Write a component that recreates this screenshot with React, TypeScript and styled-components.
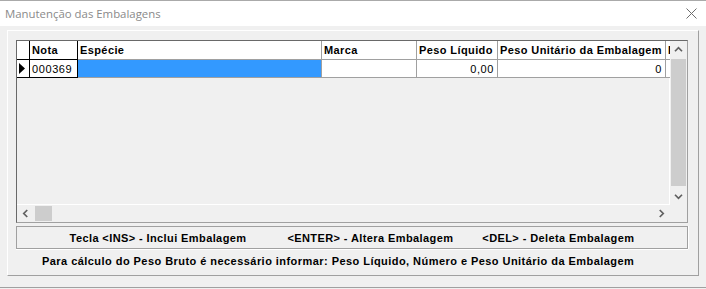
import React from 'react';
import styled, { createGlobalStyle } from 'styled-components';

const Global = createGlobalStyle`
  html, body { margin: 0; padding: 0; background: #f0f0f0; }
  body { width: 706px; height: 289px; overflow: hidden; font-family: "Liberation Sans", Arial, sans-serif; }
`;

const Window = styled.div`
  width: 706px;
  height: 288px;
  box-sizing: border-box;
  display: flex;
  flex-direction: column;
  border-top: 1px solid #aaaaaa;
  border-bottom: 1px solid #a0a0a0;
  background: #f0f0f0;
`;

const TitleBar = styled.div`
  height: 25px;
  flex: none;
  background: #ffffff;
  display: flex;
  align-items: center;
  justify-content: space-between;
  padding: 0 9px 0 5px;
`;

const Title = styled.span`
  font-family: "Open Sans", "Noto Sans", sans-serif;
  font-size: 11.4px;
  color: #8a8a8a;
`;

const Body = styled.div`
  flex: 1;
  padding: 4px 7px 0 7px;
  display: flex;
  flex-direction: column;
`;

const Panel = styled.div`
  height: 246px;
  box-sizing: border-box;
  border-top: 1px solid #ffffff;
  border-left: 1px solid #ffffff;
  border-right: 1px solid #a0a0a0;
  border-bottom: 1px solid #a0a0a0;
  padding: 9px 0 0 8px;
  display: flex;
  flex-direction: column;
`;

const GridFrame = styled.div`
  width: 672px;
  height: 183px;
  box-sizing: border-box;
  border: 1px solid #a0a0a0;
  border-top-color: #696969;
  border-left-color: #696969;
  display: grid;
  grid-template-columns: 653px 17px;
  grid-template-rows: 164px 17px;
  background: #f0f0f0;
`;

const Viewport = styled.div`
  overflow: hidden;
  background: #f0f0f0;
  box-shadow: inset -1px -1px 0 #ffffff;
`;

const Row = styled.div<{ $h: number }>`
  display: flex;
  height: ${p => p.$h}px;
  width: max-content;
`;

const Cell = styled.div<{ $w: number; $align?: string; $bold?: boolean; $fixed?: boolean; $bg?: string }>`
  width: ${p => p.$w}px;
  flex: none;
  box-sizing: border-box;
  height: 100%;
  background: ${p => p.$bg || '#ffffff'};
  border-right: 1px solid ${p => (p.$fixed ? '#000000' : '#a0a0a0')};
  border-bottom: 1px solid ${p => (p.$fixed ? '#000000' : '#a0a0a0')};
  padding: 0 3px 0 2px;
  display: flex;
  align-items: center;
  justify-content: ${p => p.$align || 'flex-start'};
  font-family: "Liberation Sans", Arial, sans-serif;
  font-size: 11px;
  font-weight: ${p => (p.$bold ? 700 : 400)};
  letter-spacing: ${p => (p.$bold ? '0.4px' : '0.6px')};
  color: #000000;
  white-space: nowrap;
  overflow: hidden;
`;

const ScrollV = styled.div`
  display: flex;
  flex-direction: column;
  background: #f0f0f0;
`;

const ScrollH = styled.div`
  display: flex;
  background: #f0f0f0;
`;

const Corner = styled.div`
  background: #f0f0f0;
`;

const Arrow = styled.div`
  width: 17px;
  height: 17px;
  flex: none;
  display: flex;
  align-items: center;
  justify-content: center;
`;

const TrackV = styled.div`
  flex: 1;
  padding: 1px 1px 0 1px;
`;

const ThumbV = styled.div`
  height: 127px;
  background: #cdcdcd;
`;

const TrackH = styled.div`
  flex: 1;
  padding: 1px 0 1px 1px;
`;

const ThumbH = styled.div`
  width: 17px;
  height: 100%;
  background: #cdcdcd;
`;

const InfoBox = styled.div`
  margin-top: 3px;
  width: 672px;
  height: 23px;
  box-sizing: border-box;
  border: 1px solid #a0a0a0;
  box-shadow: 0 1px 0 #ffffff, 1px 0 0 #ffffff;
  display: flex;
  align-items: center;
  justify-content: center;
  padding-left: 0;
`;

const Hint = styled.span<{ $gap?: number }>`
  margin-left: ${p => p.$gap || 0}px;
  font-size: 11px;
  font-weight: 700;
  letter-spacing: 0.4px;
  color: #000;
  white-space: nowrap;
`;

const Note = styled.div`
  margin-top: 5px;
  padding-left: 26px;
  font-size: 11px;
  font-weight: 700;
  letter-spacing: 0.45px;
  color: #000;
  white-space: nowrap;
  line-height: 14px;
`;

const Chevron = ({ dir }: { dir: 'up' | 'down' | 'left' | 'right' }) => {
  const pts: Record<string, string> = {
    up: '1,5 4.5,1.5 8,5',
    down: '1,1.5 4.5,5 8,1.5',
    left: '5,1 1.5,4.5 5,8',
    right: '1.5,1 5,4.5 1.5,8',
  };
  const vertical = dir === 'up' || dir === 'down';
  return (
    <svg width={vertical ? 9 : 7} height={vertical ? 7 : 9} viewBox={vertical ? '0 0 9 6.5' : '0 0 6.5 9'}>
      <polyline points={pts[dir]} fill="none" stroke="#606060" strokeWidth="1.7" />
    </svg>
  );
};

const columns = [
  { w: 13, title: '', fixed: true },
  { w: 48, title: 'Nota', fixed: true },
  { w: 244, title: 'Espécie' },
  { w: 95, title: 'Marca' },
  { w: 81, title: 'Peso Líquido' },
  { w: 168, title: 'Peso Unitário da Embalagem' },
  { w: 80, title: 'Peso Bruto' },
];

export default function App() {
  return (
    <>
      <Global />
      <Window>
        <TitleBar>
          <Title>Manutenção das Embalagens</Title>
          <svg width="11" height="11" viewBox="0 0 11 11">
            <path d="M0.5 0.5 L10.5 10.5 M10.5 0.5 L0.5 10.5" stroke="#6d6d6d" strokeWidth="1" />
          </svg>
        </TitleBar>
        <Body>
          <Panel>
            <GridFrame>
              <Viewport>
                <Row $h={19}>
                  {columns.map((c, i) => (
                    <Cell key={i} $w={c.w} $bold $fixed={c.fixed}>
                      {c.title}
                    </Cell>
                  ))}
                </Row>
                <Row $h={18}>
                  <Cell $w={13} $fixed>
                    <svg width="6" height="11" viewBox="0 0 6 11">
                      <polygon points="0,0 6,5.5 0,11" fill="#000" />
                    </svg>
                  </Cell>
                  <Cell $w={48} $fixed>000369</Cell>
                  <Cell $w={244} $bg="#3399ff" />
                  <Cell $w={95} />
                  <Cell $w={81} $align="flex-end">0,00</Cell>
                  <Cell $w={168} $align="flex-end">0</Cell>
                  <Cell $w={80} />
                </Row>
              </Viewport>
              <ScrollV>
                <Arrow><Chevron dir="up" /></Arrow>
                <TrackV><ThumbV /></TrackV>
                <Arrow><Chevron dir="down" /></Arrow>
              </ScrollV>
              <ScrollH>
                <Arrow><Chevron dir="left" /></Arrow>
                <TrackH><ThumbH /></TrackH>
                <Arrow><Chevron dir="right" /></Arrow>
              </ScrollH>
              <Corner />
            </GridFrame>
            <InfoBox>
              <Hint>Tecla &lt;INS&gt; - Inclui Embalagem</Hint>
              <Hint $gap={41}>&lt;ENTER&gt; - Altera Embalagem</Hint>
              <Hint $gap={29}>&lt;DEL&gt; - Deleta Embalagem</Hint>
            </InfoBox>
            <Note>Para cálculo do Peso Bruto é necessário informar: Peso Líquido, Número e Peso Unitário da Embalagem</Note>
          </Panel>
        </Body>
      </Window>
    </>
  );
}
